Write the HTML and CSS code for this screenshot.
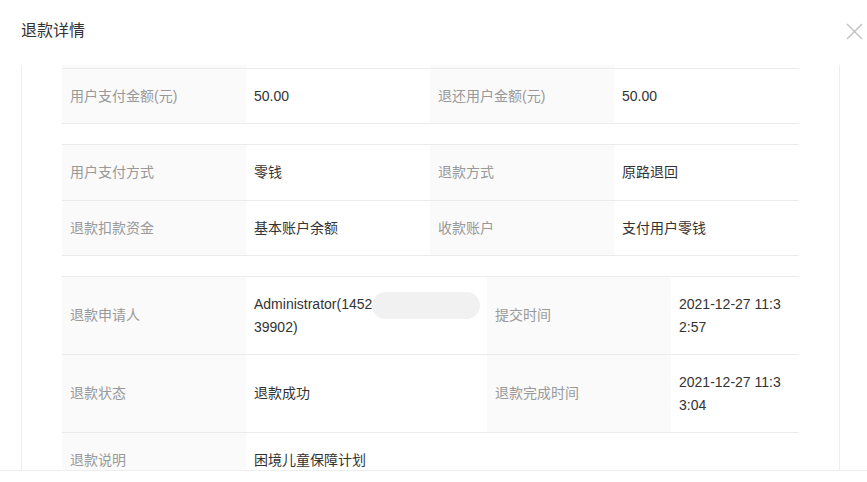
FILE: index.html
```html
<!DOCTYPE html>
<html lang="zh-CN">

<head>
  <meta charset="UTF-8" />
  <meta name="viewport" content="width=device-width, initial-scale=1.0" />
  <title>退款详情</title>
  <link rel="stylesheet" href="styles.css">
</head>

<body>
  <div class="modal">
    <div class="modal-header">
      <span class="modal-title">退款详情</span>
      <button class="modal-close" aria-label="关闭">
        <svg width="17" height="17" viewBox="0 0 17 17">
          <path d="M1 1 L16 16 M16 1 L1 16" stroke="#c0c0c0" stroke-width="1.4" fill="none" />
        </svg>
      </button>
    </div>

    <div class="modal-body">
      <div class="detail-scroll">
        <div class="detail-inner">

          <table class="detail-table">
            <colgroup>
              <col class="col-label" />
              <col class="col-value" />
              <col class="col-label" />
              <col />
            </colgroup>
            <tbody>
              <!-- row scrolled out of view -->
              <tr>
                <td class="label">&nbsp;</td>
                <td></td>
                <td class="label"></td>
                <td></td>
              </tr>
              <tr>
                <td class="label">用户支付金额(元)</td>
                <td>50.00</td>
                <td class="label">退还用户金额(元)</td>
                <td>50.00</td>
              </tr>
            </tbody>
          </table>

          <table class="detail-table">
            <colgroup>
              <col class="col-label" />
              <col class="col-value" />
              <col class="col-label" />
              <col />
            </colgroup>
            <tbody>
              <tr>
                <td class="label">用户支付方式</td>
                <td>零钱</td>
                <td class="label">退款方式</td>
                <td>原路退回</td>
              </tr>
              <tr>
                <td class="label">退款扣款资金</td>
                <td>基本账户余额</td>
                <td class="label">收款账户</td>
                <td>支付用户零钱</td>
              </tr>
            </tbody>
          </table>

          <table class="detail-table">
            <colgroup>
              <col class="col-label" />
              <col class="col-wide" />
              <col class="col-label" />
              <col />
            </colgroup>
            <tbody>
              <tr>
                <td class="label">退款申请人</td>
                <td><span class="nowrap">Administrator(1452<span class="masked"></span></span><br />39902)</td>
                <td class="label">提交时间</td>
                <td class="wrap">2021-12-27 11:32:57</td>
              </tr>
              <tr>
                <td class="label">退款状态</td>
                <td>退款成功</td>
                <td class="label">退款完成时间</td>
                <td class="wrap">2021-12-27 11:33:04</td>
              </tr>
              <tr>
                <td class="label">退款说明</td>
                <td colspan="3">困境儿童保障计划</td>
              </tr>
            </tbody>
          </table>

        </div>
      </div>
    </div>

    <div class="modal-footer"></div>
  </div>
</body>

</html>
```

FILE: styles.css
```css
body {
  margin: 0;
  background-color: #fff;
  font-family: "Liberation Sans", Arial, "Noto Sans CJK SC", sans-serif;
  color: #333;
}

.modal {
  width: 867px;
  height: 482px;
  overflow: hidden;
}

.modal-header {
  display: flex;
  justify-content: space-between;
  align-items: flex-start;
  height: 65px;
  padding: 20px 4px 0 21px;
  box-sizing: border-box;
}

.modal-title {
  font-size: 16px;
  line-height: 22px;
  color: #333;
}

.modal-close {
  margin-top: 3px;
  padding: 0;
  border: none;
  background: none;
  cursor: pointer;
  line-height: 0;
}

.detail-scroll {
  width: 817px;
  height: 405px;
  margin-left: 21px;
  border-left: 1px solid #eee;
  border-right: 1px solid #eee;
  overflow: hidden;
}

.detail-inner {
  margin-top: -53px;
  padding: 0 40px;
}

.detail-table {
  width: 737px;
  table-layout: fixed;
  border-collapse: separate;
  border-spacing: 0;
  border-top: 1px solid #ebebeb;
  margin-bottom: 20px;
  font-size: 14px;
}

.col-label {
  width: 184px;
}

.col-value {
  width: 184px;
}

.col-wide {
  width: 241px;
}

.detail-table td {
  padding: 16px 8px;
  line-height: 22.5px;
  border-bottom: 1px solid #ebebeb;
  color: #333;
  vertical-align: middle;
}

.detail-table td.label {
  background-color: #fafafa;
  color: #999;
}

.detail-table td.wrap {
  word-break: break-all;
}

.nowrap {
  white-space: nowrap;
}

.masked {
  display: inline-block;
  vertical-align: top;
  width: 108px;
  height: 27px;
  margin-top: -1px;
  margin-bottom: -6px;
  border-radius: 14px;
  background-color: #f1f1f1;
}

.modal-footer {
  height: 12px;
  border-top: 1px solid #eee;
}
```
